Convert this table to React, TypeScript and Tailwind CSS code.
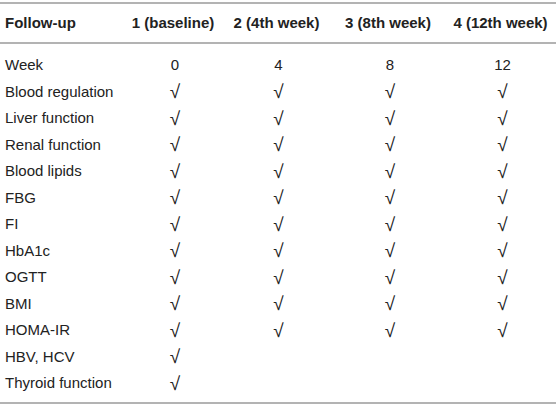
const COLUMNS = ["1 (baseline)", "2 (4th week)", "3 (8th week)", "4 (12th week)"];

const ROWS: { label: string; cells: string[] }[] = [
  { label: "Week", cells: ["0", "4", "8", "12"] },
  { label: "Blood regulation", cells: ["√", "√", "√", "√"] },
  { label: "Liver function", cells: ["√", "√", "√", "√"] },
  { label: "Renal function", cells: ["√", "√", "√", "√"] },
  { label: "Blood lipids", cells: ["√", "√", "√", "√"] },
  { label: "FBG", cells: ["√", "√", "√", "√"] },
  { label: "FI", cells: ["√", "√", "√", "√"] },
  { label: "HbA1c", cells: ["√", "√", "√", "√"] },
  { label: "OGTT", cells: ["√", "√", "√", "√"] },
  { label: "BMI", cells: ["√", "√", "√", "√"] },
  { label: "HOMA-IR", cells: ["√", "√", "√", "√"] },
  { label: "HBV, HCV", cells: ["√", "", "", ""] },
  { label: "Thyroid function", cells: ["√", "", "", ""] },
];

const GRID = "grid grid-cols-[124px_98px_109px_114px_111px]";

export default function App() {
  return (
    <div className="h-[407px] w-[556px] bg-white pt-[2px] font-['Liberation_Sans',Arial,sans-serif] text-[15px] text-[#222]">
      <div className="border-t-2 border-[#b3b3b3]">
        <div className={`${GRID} h-[40px] items-center border-b-2 border-[#b3b3b3] font-bold`}>
          <div className="pl-[5px]">Follow-up</div>
          {COLUMNS.map((c) => (
            <div key={c} className="whitespace-nowrap text-center">
              {c}
            </div>
          ))}
        </div>
        <div className="pt-[8px] pb-[5px]">
          {ROWS.map((row) => (
            <div key={row.label} className={`${GRID} h-[26.5px] items-center`}>
              <div className="whitespace-nowrap pl-[5px]">{row.label}</div>
              {row.cells.map((v, i) => (
                <div key={i} className={v === "√" ? "pl-[4px] text-center text-[19px] leading-none" : "pl-[4px] text-center"}>
                  {v}
                </div>
              ))}
            </div>
          ))}
        </div>
        <div className="border-t-2 border-[#b3b3b3]" />
      </div>
    </div>
  );
}
